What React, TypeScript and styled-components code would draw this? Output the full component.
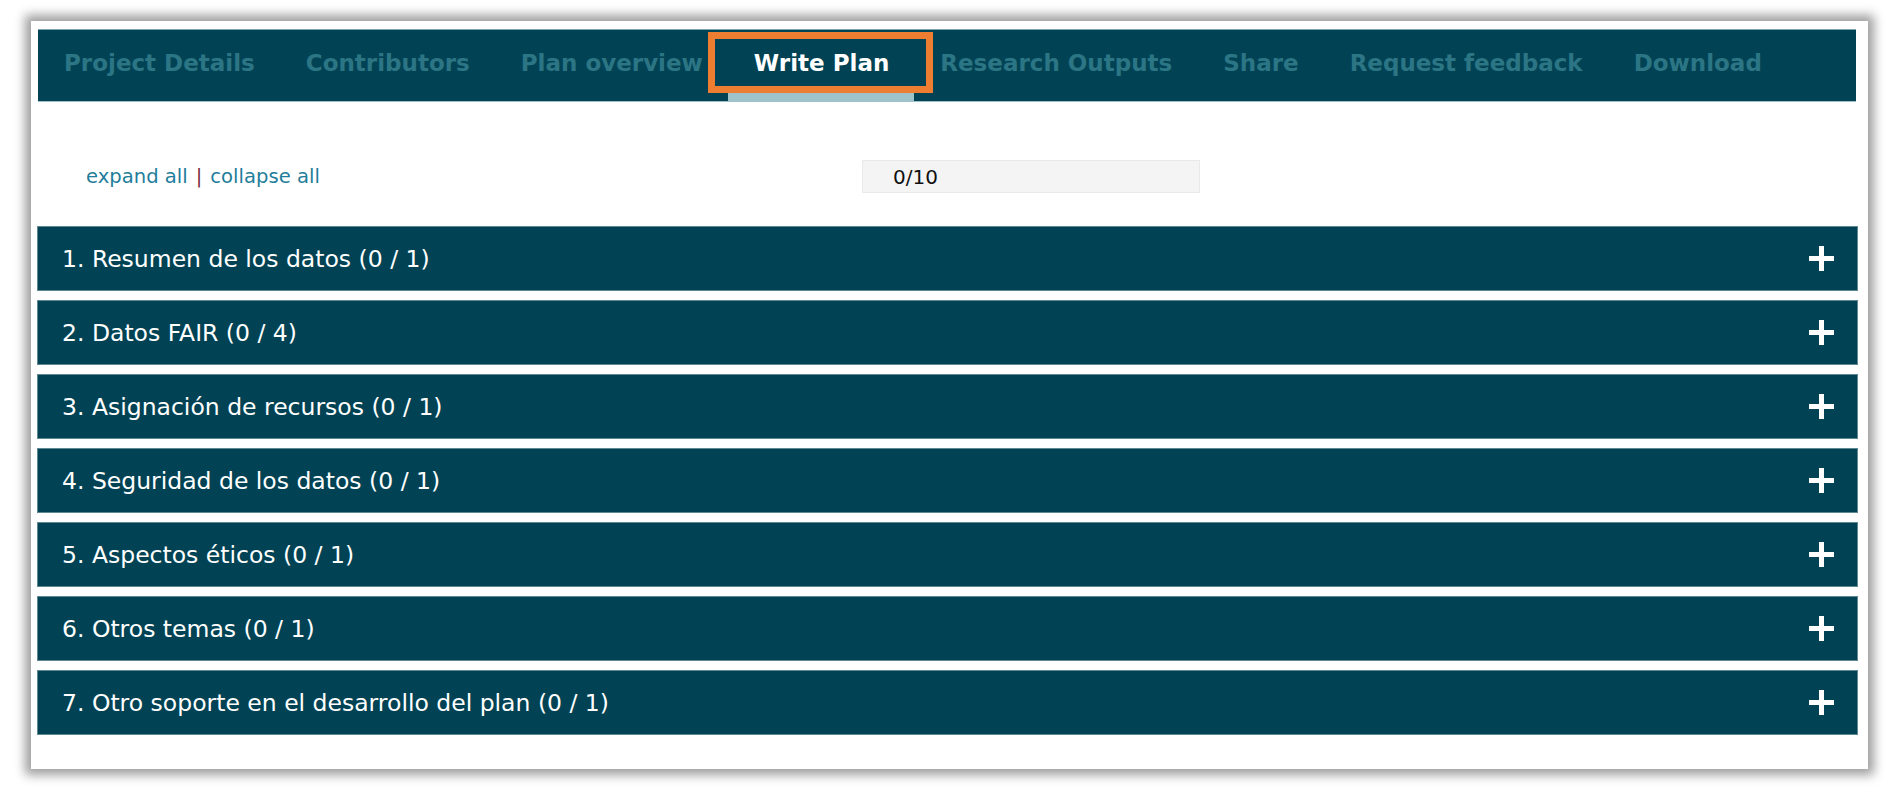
import React from "react";
import styled, { createGlobalStyle } from "styled-components";

const GlobalStyle = createGlobalStyle`
  html, body {
    margin: 0;
    padding: 0;
    background: #ffffff;
  }
  body {
    font-family: "DejaVu Sans", Verdana, sans-serif;
  }
`;

const Page = styled.div`
  padding: 21px 32px 23px 31px;
`;

const Card = styled.div`
  background: #ffffff;
  box-shadow: 0 0 10px 6px rgba(0, 0, 0, 0.38);
  padding: 8px 10px 34px 6px;
`;

const Nav = styled.nav`
  display: flex;
  height: 73px;
  box-sizing: border-box;
  margin: 0 2px 0 1px;
  background: #014354;
  border-top: 1px solid #7fa6b0;
  border-bottom: 1px solid #9fc0c8;
`;

const NavItem = styled.div<{ $active?: boolean }>`
  position: relative;
  display: flex;
  align-items: center;
  padding: 3px 25px 0 26px;
  box-sizing: border-box;
  border-bottom: 8px solid ${(p) => (p.$active ? "#9fc3cb" : "transparent")};
  font-weight: bold;
  font-size: 23px;
  white-space: nowrap;
  color: ${(p) => (p.$active ? "#ffffff" : "#2c7585")};
`;

const Highlight = styled.span`
  position: absolute;
  top: 2px;
  bottom: 0;
  left: -20px;
  right: -19px;
  border: 7px solid #ed7d31;
  box-sizing: border-box;
  pointer-events: none;
`;

const Toolbar = styled.div`
  display: grid;
  grid-template-columns: 776px 338px;
  align-items: center;
  margin-top: 58px;
  padding-left: 49px;
  height: 33px;
`;

const Links = styled.div`
  font-size: 19.6px;
  color: #1f7e9b;
  white-space: nowrap;
`;

const Link = styled.span`
  color: #1f7e9b;
  cursor: pointer;
`;

const Pipe = styled.span`
  color: #7a2a46;
  margin: 0 8px;
`;

const Progress = styled.div`
  height: 33px;
  box-sizing: border-box;
  background: #f4f4f4;
  border: 1px solid #e9e9e9;
  display: flex;
  align-items: center;
  padding-left: 30px;
  font-size: 20px;
  color: #111111;
`;

const Sections = styled.div`
  display: flex;
  flex-direction: column;
  gap: 9px;
  margin-top: 33px;
`;

const Section = styled.div`
  display: flex;
  align-items: center;
  justify-content: space-between;
  height: 65px;
  box-sizing: border-box;
  background: #014354;
  border: 1px solid #5f8893;
  padding: 0 23px 0 24px;
  color: #ffffff;
  font-size: 23.5px;
  white-space: nowrap;
`;

const PlusIcon = () => (
  <svg width="25" height="25" viewBox="0 0 25 25" aria-hidden="true">
    <rect x="0" y="10" width="25" height="5" fill="#ffffff" />
    <rect x="10" y="0" width="5" height="25" fill="#ffffff" />
  </svg>
);

const tabs = [
  "Project Details",
  "Contributors",
  "Plan overview",
  "Write Plan",
  "Research Outputs",
  "Share",
  "Request feedback",
  "Download",
];

const sections = [
  "1. Resumen de los datos (0 / 1)",
  "2. Datos FAIR (0 / 4)",
  "3. Asignación de recursos (0 / 1)",
  "4. Seguridad de los datos (0 / 1)",
  "5. Aspectos éticos (0 / 1)",
  "6. Otros temas (0 / 1)",
  "7. Otro soporte en el desarrollo del plan (0 / 1)",
];

export default function App() {
  return (
    <>
      <GlobalStyle />
      <Page>
        <Card>
          <Nav>
            {tabs.map((t) => (
              <NavItem key={t} $active={t === "Write Plan"}>
                {t}
                {t === "Write Plan" && <Highlight />}
              </NavItem>
            ))}
          </Nav>
          <Toolbar>
            <Links>
              <Link>expand all</Link>
              <Pipe>|</Pipe>
              <Link>collapse all</Link>
            </Links>
            <Progress>0/10</Progress>
          </Toolbar>
          <Sections>
            {sections.map((s) => (
              <Section key={s}>
                <span>{s}</span>
                <PlusIcon />
              </Section>
            ))}
          </Sections>
        </Card>
      </Page>
    </>
  );
}
